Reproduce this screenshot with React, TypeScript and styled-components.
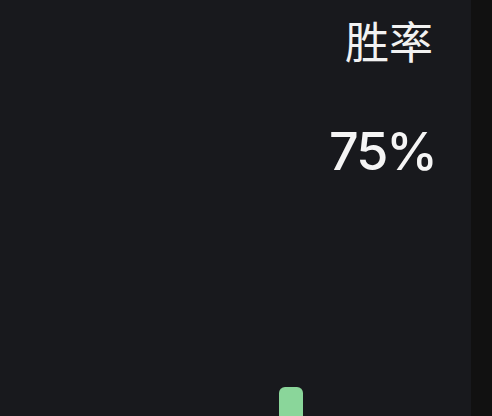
import styled, { createGlobalStyle } from "styled-components";

const GlobalStyle = createGlobalStyle`
  html, body {
    margin: 0;
    padding: 0;
    background: #111111;
  }
  body {
    font-family: Inter, "Noto Sans CJK SC", sans-serif;
  }
`;

const Screen = styled.div`
  display: flex;
  width: 492px;
  height: 416px;
  overflow: hidden;
`;

const Panel = styled.section`
  width: 471px;
  height: 100%;
  background: #18191d;
  display: flex;
  flex-direction: column;
  align-items: flex-end;
  padding-right: 37px;
  box-sizing: border-box;
`;

const Edge = styled.div`
  flex: 1;
  background: #111111;
`;

const Label = styled.div`
  margin-top: 12px;
  margin-right: 1px;
  font-family: "Noto Sans CJK SC", sans-serif;
  font-size: 44px;
  line-height: 56px;
  color: #f2f2f2;
`;

const Value = styled.div`
  margin-top: 52px;
  margin-right: -2px;
  font-size: 52px;
  line-height: 64px;
  font-weight: 500;
  letter-spacing: -2px;
  color: #f5f5f5;
`;

const Chart = styled.div`
  flex: 1;
  align-self: stretch;
  display: flex;
  align-items: flex-end;
  padding-left: 279px;
`;

const Bar = styled.div<{ $h: number }>`
  width: 24px;
  height: ${(p) => p.$h}px;
  background: #8ad69a;
  border-radius: 6px 6px 0 0;
`;

const App = () => {
  return (
    <>
      <GlobalStyle />
      <Screen>
        <Panel>
          <Label>胜率</Label>
          <Value>75%</Value>
          <Chart>
            <Bar $h={29} />
          </Chart>
        </Panel>
        <Edge />
      </Screen>
    </>
  );
};

export default App;
